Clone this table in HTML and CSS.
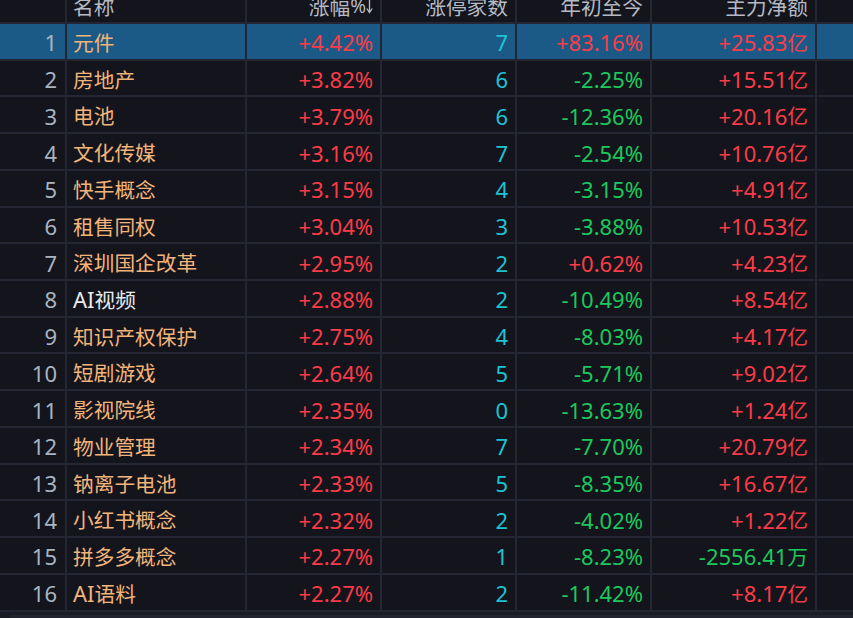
FILE: index.html
```html
<!DOCTYPE html>
<html lang="zh">
<head>
<meta charset="utf-8">
<title>板块涨幅</title>
<link rel="stylesheet" href="styles.css">
</head>
<body>
<div class="board">
  <div class="row head">
    <div class="c num"></div>
    <div class="c name"><span class="cn">名称</span></div>
    <div class="c r"><span class="cn">涨幅</span><span class="pct">%</span><svg class="arrow" width="7" height="16" viewBox="0 0 7 16"><path d="M3.5 0V14M0.8 10.5L3.5 14.5L6.2 10.5" fill="none" stroke="#b6bac2" stroke-width="1.3"/></svg></div>
    <div class="c r"><span class="cn">涨停家数</span></div>
    <div class="c r"><span class="cn">年初至今</span></div>
    <div class="c r"><span class="cn">主力净额</span></div>
    <div class="c"></div>
  </div>
  <div class="row sel">
    <div class="c num">1</div><div class="c name"><span class="cn">元件</span></div><div class="c r up">+4.42%</div><div class="c r cy">7</div><div class="c r up">+83.16%</div><div class="c r up">+25.83<span class="cn">亿</span></div><div class="c"></div>
  </div>
  <div class="row">
    <div class="c num">2</div><div class="c name"><span class="cn">房地产</span></div><div class="c r up">+3.82%</div><div class="c r cy">6</div><div class="c r dn">-2.25%</div><div class="c r up">+15.51<span class="cn">亿</span></div><div class="c"></div>
  </div>
  <div class="row">
    <div class="c num">3</div><div class="c name"><span class="cn">电池</span></div><div class="c r up">+3.79%</div><div class="c r cy">6</div><div class="c r dn">-12.36%</div><div class="c r up">+20.16<span class="cn">亿</span></div><div class="c"></div>
  </div>
  <div class="row">
    <div class="c num">4</div><div class="c name"><span class="cn">文化传媒</span></div><div class="c r up">+3.16%</div><div class="c r cy">7</div><div class="c r dn">-2.54%</div><div class="c r up">+10.76<span class="cn">亿</span></div><div class="c"></div>
  </div>
  <div class="row">
    <div class="c num">5</div><div class="c name"><span class="cn">快手概念</span></div><div class="c r up">+3.15%</div><div class="c r cy">4</div><div class="c r dn">-3.15%</div><div class="c r up">+4.91<span class="cn">亿</span></div><div class="c"></div>
  </div>
  <div class="row">
    <div class="c num">6</div><div class="c name"><span class="cn">租售同权</span></div><div class="c r up">+3.04%</div><div class="c r cy">3</div><div class="c r dn">-3.88%</div><div class="c r up">+10.53<span class="cn">亿</span></div><div class="c"></div>
  </div>
  <div class="row">
    <div class="c num">7</div><div class="c name"><span class="cn">深圳国企改革</span></div><div class="c r up">+2.95%</div><div class="c r cy">2</div><div class="c r up">+0.62%</div><div class="c r up">+4.23<span class="cn">亿</span></div><div class="c"></div>
  </div>
  <div class="row">
    <div class="c num">8</div><div class="c name white">AI<span class="cn">视频</span></div><div class="c r up">+2.88%</div><div class="c r cy">2</div><div class="c r dn">-10.49%</div><div class="c r up">+8.54<span class="cn">亿</span></div><div class="c"></div>
  </div>
  <div class="row">
    <div class="c num">9</div><div class="c name"><span class="cn">知识产权保护</span></div><div class="c r up">+2.75%</div><div class="c r cy">4</div><div class="c r dn">-8.03%</div><div class="c r up">+4.17<span class="cn">亿</span></div><div class="c"></div>
  </div>
  <div class="row">
    <div class="c num">10</div><div class="c name"><span class="cn">短剧游戏</span></div><div class="c r up">+2.64%</div><div class="c r cy">5</div><div class="c r dn">-5.71%</div><div class="c r up">+9.02<span class="cn">亿</span></div><div class="c"></div>
  </div>
  <div class="row">
    <div class="c num">11</div><div class="c name"><span class="cn">影视院线</span></div><div class="c r up">+2.35%</div><div class="c r cy">0</div><div class="c r dn">-13.63%</div><div class="c r up">+1.24<span class="cn">亿</span></div><div class="c"></div>
  </div>
  <div class="row">
    <div class="c num">12</div><div class="c name"><span class="cn">物业管理</span></div><div class="c r up">+2.34%</div><div class="c r cy">7</div><div class="c r dn">-7.70%</div><div class="c r up">+20.79<span class="cn">亿</span></div><div class="c"></div>
  </div>
  <div class="row">
    <div class="c num">13</div><div class="c name"><span class="cn">钠离子电池</span></div><div class="c r up">+2.33%</div><div class="c r cy">5</div><div class="c r dn">-8.35%</div><div class="c r up">+16.67<span class="cn">亿</span></div><div class="c"></div>
  </div>
  <div class="row">
    <div class="c num">14</div><div class="c name"><span class="cn">小红书概念</span></div><div class="c r up">+2.32%</div><div class="c r cy">2</div><div class="c r dn">-4.02%</div><div class="c r up">+1.22<span class="cn">亿</span></div><div class="c"></div>
  </div>
  <div class="row">
    <div class="c num">15</div><div class="c name"><span class="cn">拼多多概念</span></div><div class="c r up">+2.27%</div><div class="c r cy">1</div><div class="c r dn">-8.23%</div><div class="c r dn">-2556.41<span class="cn">万</span></div><div class="c"></div>
  </div>
  <div class="row">
    <div class="c num">16</div><div class="c name">AI<span class="cn">语料</span></div><div class="c r up">+2.27%</div><div class="c r cy">2</div><div class="c r dn">-11.42%</div><div class="c r up">+8.17<span class="cn">亿</span></div><div class="c"></div>
  </div>
  <div class="scrollbar"><div class="thumb"></div></div>
</div>
</body>
</html>
```

FILE: styles.css
```css
html, body {
  margin: 0;
  padding: 0;
  background: #13141c;
  overflow: hidden;
}
.board {
  width: 853px;
  height: 618px;
  display: flex;
  flex-direction: column;
  gap: 2px;
  background: #242733;
  font-family: "Noto Sans", "Noto Sans CJK SC", sans-serif;
  font-size: 22px;
  overflow: hidden;
}
.row {
  display: grid;
  grid-template-columns: 65px 178px 133px 133px 133px 163px 1fr;
  column-gap: 2px;
  height: 34.73px;
  flex: none;
}
.row.head {
  height: 22px;
}
.c {
  background: #13141c;
  display: flex;
  align-items: center;
  white-space: nowrap;
  overflow: hidden;
  line-height: 1;
  padding-top: 2px;
  box-sizing: border-box;
}
.cn {
  font-family: "Noto Sans CJK SC", sans-serif;
  font-size: 20.7px;
}
.sel .c {
  background: #1b5a86;
}
.head .c {
  color: #b6bac2;
  align-items: flex-start;
  line-height: 12px;
  padding-top: 0;
}
.pct {
  font-size: 19px;
}
.num {
  justify-content: flex-end;
  padding-right: 8px;
  color: #a8b4c2;
}
.name {
  padding-left: 6px;
  color: #f2b47a;
}
.name.white {
  color: #e8eaee;
}
.r {
  justify-content: flex-end;
  padding-right: 7px;
}
.up { color: #fb3c48; }
.dn { color: #1cc85c; }
.cy { color: #1ec3d3; }
.arrow {
  flex: none;
  margin-left: 0;
  margin-top: -2px;
}
.scrollbar {
  flex: 1;
  background: #1a1c25;
  display: flex;
  align-items: flex-end;
  padding-left: 10px;
}
.thumb {
  width: 843px;
  height: 3px;
  background: #22252f;
}
```
